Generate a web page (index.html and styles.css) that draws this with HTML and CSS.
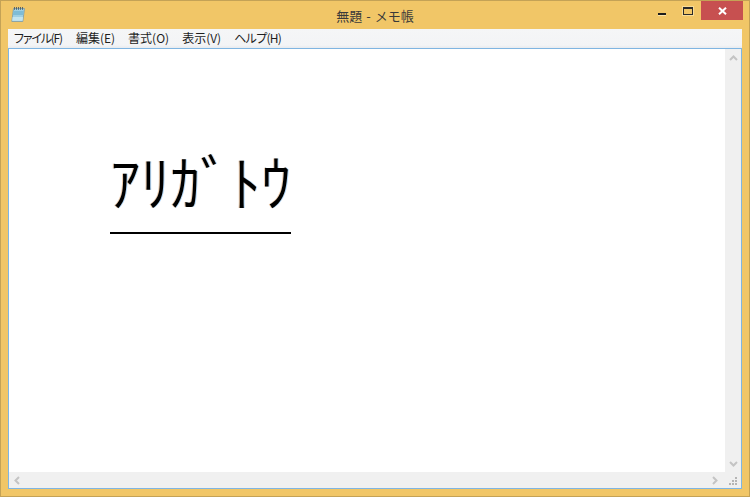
FILE: index.html
```html
<!DOCTYPE html>
<html lang="ja">
<head>
<meta charset="utf-8">
<title>無題 - メモ帳</title>
<link rel="stylesheet" href="styles.css">
</head>
<body>
<div class="window">
  <header class="titlebar">
    <svg class="app-icon" width="16" height="16" viewBox="0 0 16 16">
      <path d="M3.5 2.5H14.5L12.8 15.5H1.8Z" fill="#9fd0e4" stroke="#7f9ba5" stroke-width=".8"/>
      <path d="M3.3 5H13.8L13.3 9H2.8Z" fill="#7fbcd6"/>
      <path d="M2.6 11H13L12.6 14.8H2.2Z" fill="#c4e4ef"/>
      <path d="M4.5 1V3.8M6.5 1V3.8M8.5 1V3.8M10.5 1V3.8M12.5 1V3.8" stroke="#55666d" stroke-width="1"/>
    </svg>
    <span class="title">無題 - メモ帳</span>
    <div class="controls">
      <span class="btn btn-min"><i class="min-glyph"></i></span>
      <span class="btn btn-max"><i class="max-glyph"></i></span>
      <span class="btn btn-close">
        <svg width="9" height="8" viewBox="0 0 9 8"><path d="M1 .7L8 7.3M8 .7L1 7.3" stroke="#fff" stroke-width="2"/></svg>
      </span>
    </div>
  </header>
  <div class="frame">
    <nav class="menubar">
      <span class="menu-item kana-file">ファイル(F)</span>
      <span class="menu-item">編集(E)</span>
      <span class="menu-item">書式(O)</span>
      <span class="menu-item">表示(V)</span>
      <span class="menu-item kana-help">ヘルプ(H)</span>
    </nav>
    <div class="client">
      <div class="row">
        <div class="editor"><span class="big">ｱﾘｶﾞﾄｳ</span></div>
        <div class="vscroll">
          <svg width="9" height="6" viewBox="0 0 9 6"><path d="M1 5L4.5 1.5L8 5" fill="none" stroke="#c4c4c4" stroke-width="2"/></svg>
          <svg width="9" height="6" viewBox="0 0 9 6"><path d="M1 1L4.5 4.5L8 1" fill="none" stroke="#c4c4c4" stroke-width="2"/></svg>
        </div>
      </div>
      <div class="hscroll">
        <svg width="6" height="9" viewBox="0 0 6 9"><path d="M5 1L1.5 4.5L5 8" fill="none" stroke="#c4c4c4" stroke-width="2"/></svg>
        <svg class="right-arrow" width="6" height="9" viewBox="0 0 6 9"><path d="M1 1L4.5 4.5L1 8" fill="none" stroke="#c4c4c4" stroke-width="2"/></svg>
        <svg class="grip" width="16" height="15" viewBox="0 0 16 15"><path d="M10 4h2v2h-2zM7 7h2v2H7zM10 7h2v2h-2zM4 10h2v2H4zM7 10h2v2H7zM10 10h2v2h-2z" fill="#b5b5b5"/></svg>
      </div>
    </div>
  </div>
</div>
</body>
</html>
```
FILE: styles.css
```css
html, body { margin: 0; padding: 0; height: 100%; overflow: hidden; background: #f1c667; }
.window {
  box-sizing: border-box;
  width: 750px;
  height: 497px;
  display: flex;
  flex-direction: column;
  background: #f1c667;
  border: 1px solid #c4a256;
  font-family: "Noto Sans CJK JP", "Noto Sans", sans-serif;
}
.titlebar {
  height: 28px;
  flex: none;
  display: flex;
  align-items: flex-start;
  position: relative;
}
.app-icon { margin: 5px 0 0 9px; }
.title {
  position: absolute;
  left: 0;
  right: 0;
  top: 5px;
  text-align: center;
  font-size: 13px;
  line-height: 19px;
  word-spacing: 1px;
  color: #3a3a3a;
}
.controls { margin-left: auto; margin-right: 6px; display: flex; }
.btn { display: flex; align-items: center; justify-content: center; height: 19px; }
.btn-min { width: 26px; }
.btn-max { width: 26px; }
.btn-close { width: 42px; background: #c75050; }
.min-glyph { display: block; width: 8px; height: 2px; background: #1c1c1c; margin-top: 6px; box-shadow: 0 1px 0 #fbe3a8; }
.max-glyph { display: block; box-sizing: border-box; width: 10px; height: 8px; border: 1px solid #2a2a2a; border-top-width: 2px; margin-top: 0; box-shadow: 0 0 0 1px #f8dc98; }
.frame {
  flex: 1;
  display: flex;
  flex-direction: column;
  margin: 0 7px 7px 7px;
  min-height: 0;
}
.menubar {
  box-sizing: border-box;
  height: 19px;
  flex: none;
  display: flex;
  align-items: center;
  gap: 13px;
  padding: 0 0 1px 6px;
  background: linear-gradient(#f5f6f7, #f3f4f6 85%, #e8ebef);
  font-size: 12px;
  line-height: 18px;
  font-feature-settings: "palt";
  color: #1e1e1e;
}
.kana-file { letter-spacing: -1.2px; margin-right: 1px; }
.kana-help { letter-spacing: -.7px; }
.client {
  flex: 1;
  min-height: 0;
  display: flex;
  flex-direction: column;
  border: 1px solid #7fb5e2;
  background: #fff;
}
.row { flex: 1; display: flex; min-height: 0; }
.editor { flex: 1; padding: 88px 0 0 101px; }
.big {
  display: inline-block;
  box-sizing: border-box;
  height: 97px;
  font-family: "Noto Sans CJK JP", sans-serif;
  font-size: 60.4px;
  font-weight: 350;
  line-height: 86px;
  color: #000;
  border-bottom: 2px solid #000;
  text-shadow: -1px 0 0 rgba(200, 110, 20, .35), 1px 0 0 rgba(70, 160, 240, .4);
}
.vscroll {
  width: 16px;
  flex: none;
  display: flex;
  flex-direction: column;
  align-items: center;
  justify-content: space-between;
  padding: 6px 0 5px;
  box-sizing: border-box;
  background: #f0f0f0;
}
.hscroll {
  height: 16px;
  flex: none;
  display: flex;
  align-items: center;
  padding-left: 5px;
  background: #f0f0f0;
  position: relative;
}
.right-arrow { margin-left: auto; margin-right: 23px; }
.grip { position: absolute; right: 0; top: 1px; }
```
